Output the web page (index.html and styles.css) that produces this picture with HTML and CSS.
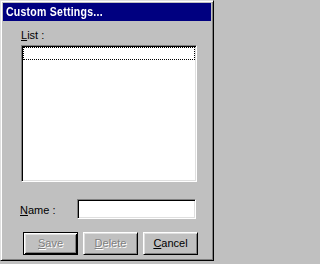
FILE: index.html
```html
<!DOCTYPE html>
<html>
<head>
<meta charset="utf-8">
<link rel="stylesheet" href="styles.css">
</head>
<body>
<div class="window">
  <div class="titlebar"><span class="title-text">Custom Settings...</span></div>
  <div class="content">
    <div class="list-label"><u>L</u>ist :</div>
    <div class="listbox">
      <div class="list-item"></div>
    </div>
    <div class="name-row">
      <span class="name-label"><u>N</u>ame :</span>
      <div class="textbox"></div>
    </div>
    <div class="buttons">
      <div class="btn default disabled"><span><u>S</u>ave</span></div>
      <div class="btn disabled"><span><u>D</u>elete</span></div>
      <div class="btn"><span><u>C</u>ancel</span></div>
    </div>
  </div>
</div>
</body>
</html>
```
FILE: styles.css
```css
html, body {
  margin: 0;
  padding: 0;
  background: #c0c0c0;
}
body {
  width: 215px;
  height: 264px;
  overflow: hidden;
  font-family: "Liberation Sans", Arial, sans-serif;
  font-size: 11px;
  color: #000;
}
.window {
  width: 214px;
  height: 261px;
  box-sizing: border-box;
  background: #c0c0c0;
  border: 1px solid;
  border-color: #dfdfdf #000 #000 #dfdfdf;
  box-shadow: inset 1px 1px #fff, inset -1px -1px #808080;
  padding: 2px;
}
.titlebar {
  height: 18px;
  background: #000080;
  color: #fff;
  font-weight: bold;
  font-size: 13px;
  line-height: 18px;
  padding-left: 3px;
  white-space: nowrap;
}
.title-text {
  display: inline-block;
  transform: scaleX(0.81);
  transform-origin: left center;
  letter-spacing: 0.3px;
}
.content {
  padding: 8px 0 0 18px;
}
.list-label {
  height: 13px;
  line-height: 13px;
}
.listbox {
  margin-top: 3px;
  width: 176px;
  height: 137px;
  box-sizing: border-box;
  background: #fff;
  border: 1px solid;
  border-color: #808080 #fff #fff #808080;
  box-shadow: inset 1px 1px #000, inset -1px -1px #dfdfdf;
  padding: 1px;
}
.list-item {
  height: 13px;
  box-sizing: border-box;
  border: 1px dotted #000;
}
.name-row {
  margin-top: 17px;
  display: flex;
  align-items: center;
  height: 20px;
}
.name-label {
  width: 57px;
  margin-left: -1px;
  padding-top: 1px;
}
.textbox {
  width: 119px;
  height: 20px;
  box-sizing: border-box;
  background: #fff;
  border: 1px solid;
  border-color: #808080 #fff #fff #808080;
  box-shadow: inset 1px 1px #000, inset -1px -1px #dfdfdf;
}
.buttons {
  margin-top: 13px;
  padding-left: 2px;
  display: flex;
  gap: 5px;
}
.btn {
  width: 55px;
  height: 23px;
  box-sizing: border-box;
  border: 1px solid;
  border-color: #fff #000 #000 #fff;
  box-shadow: inset 1px 1px #dfdfdf, inset -1px -1px #808080;
  display: flex;
  align-items: center;
  justify-content: center;
  font-size: 11px;
  line-height: 13px;
}
.btn.default {
  border: 1px solid #000;
  box-shadow: inset 1px 1px #fff, inset -1px -1px #000, inset 2px 2px #dfdfdf, inset -2px -2px #808080;
}
.btn.disabled span {
  color: #808080;
  text-shadow: 1px 1px #fff;
}
```
